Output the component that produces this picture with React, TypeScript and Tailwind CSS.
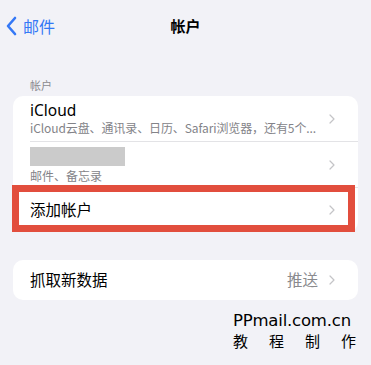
import { ChevronRight } from "lucide-react";

const FONT = { fontFamily: '"Noto Sans CJK SC", "Noto Sans", sans-serif' };

function Chevron() {
  return <ChevronRight size={16} strokeWidth={1.8} className="text-[#c4c4c7] shrink-0" />;
}

export default function App() {
  return (
    <div className="w-[371px] h-[365px] bg-[#f2f2f7] overflow-hidden" style={FONT}>
      {/* nav bar */}
      <div className="relative h-[54px] flex items-center">
        <div className="flex items-center pl-[5px] text-[#3478f6] -mt-[2px]">
          <svg width="13" height="20" viewBox="0 0 13 20" fill="none" stroke="currentColor" strokeWidth="2.6" strokeLinecap="round" strokeLinejoin="round">
            <path d="M10 2 L3 10 L10 18" />
          </svg>
          <span className="ml-[5px] text-[16px] leading-none">邮件</span>
        </div>
        <div className="absolute left-0 right-0 top-[16px] text-center text-[15px] font-semibold text-black leading-[20px]">帐户</div>
      </div>

      <div className="pl-[30px] pt-[23px] text-[11px] text-[#8a8a8e] leading-[16px]">帐户</div>

      <div className="relative mx-[13px] mt-[3px] bg-white rounded-[10px]">
        <div className="flex items-center h-[45px] pl-[17px] pr-[18px]">
          <div className="flex-1 min-w-0">
            <div className="text-[15.5px] leading-[19px] text-black" style={{ fontFamily: '"Noto Sans", "Noto Sans CJK SC", sans-serif' }}>iCloud</div>
            <div className="text-[12px] leading-[16px] text-[#838388] whitespace-nowrap tracking-[-0.1px]">iCloud云盘、通讯录、日历、Safari浏览器，还有5个...</div>
          </div>
          <div className="pl-[8px]"><Chevron /></div>
        </div>
        <div className="ml-[17px] h-px bg-[#e3e3e6]" />
        <div className="flex items-center h-[45px] pl-[17px] pr-[18px]">
          <div className="flex-1">
            <div className="w-[95px] h-[19px] bg-[#cbcbcb] mt-[2px]" />
            <div className="text-[12px] leading-[16px] text-[#838388] mt-[2px]">邮件、备忘录</div>
          </div>
          <Chevron />
        </div>
        <div className="ml-[17px] h-px bg-[#e3e3e6]" />
        <div className="flex items-center h-[44px] pl-[17px] pr-[18px]">
          <div className="flex-1 text-[15.5px] text-black">添加帐户</div>
          <Chevron />
        </div>
        <div className="absolute left-[-1px] right-[3px] top-[89px] h-[47px] border-[7px] border-[#e24e3d]" />
      </div>

      <div className="mx-[13px] mt-[28px] bg-white rounded-[10px] h-[40px] flex items-center pl-[17px] pr-[18px]">
        <div className="flex-1 text-[15.5px] text-black">抓取新数据</div>
        <span className="text-[15.5px] text-[#8a8a8e] mr-[6px]">推送</span>
        <Chevron />
      </div>

      <div className="ml-[233px] w-[123px] mt-[12px] text-black" style={{ fontFamily: '"DejaVu Sans", "Noto Sans CJK SC", sans-serif' }}>
        <div className="text-[16.5px] leading-[18px] tracking-[-0.2px]">PPmail.com.cn</div>
        <div className="flex justify-between text-[15px] leading-[19px] mt-[1px]" style={FONT}>
          <span>教</span><span>程</span><span>制</span><span>作</span>
        </div>
      </div>
    </div>
  );
}
